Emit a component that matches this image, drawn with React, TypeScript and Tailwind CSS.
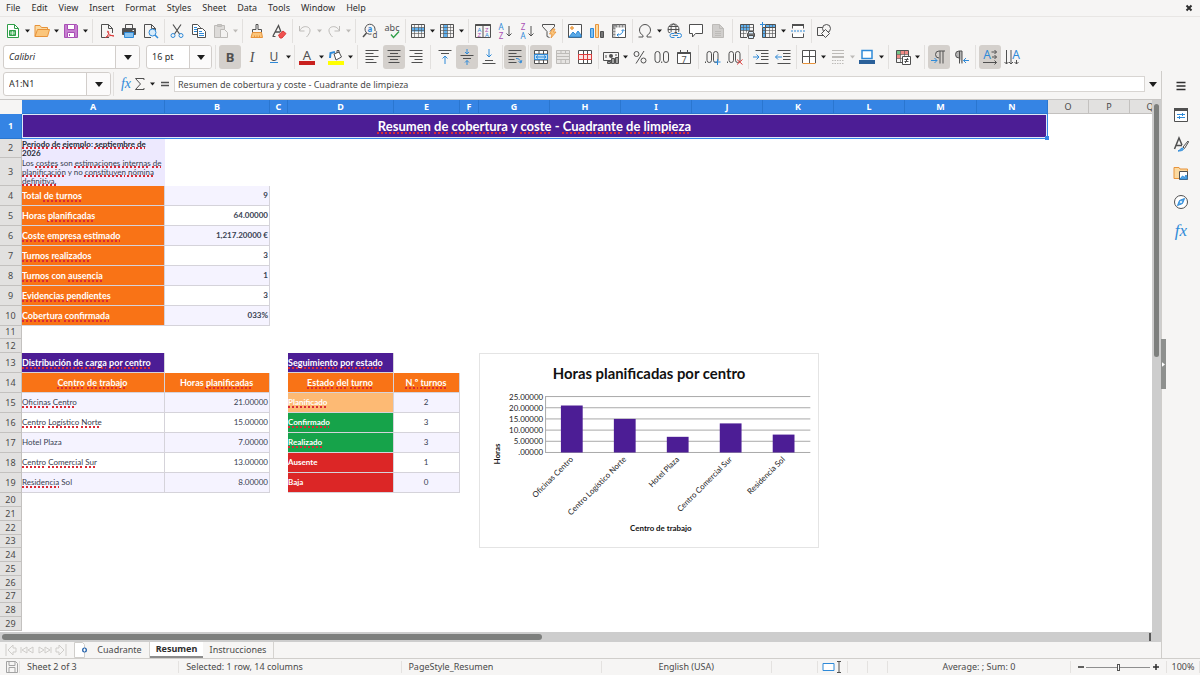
import React from "react";
import clsx from "clsx";

const DARK = "#505050";
const BLUE = "#2f8ad8";
const ORANGE = "#e8933a";
const PURPLE = "#a94fb5";
const RED = "#dd3b3b";
const GREEN = "#2f9e48";
const MUTED = "#bdbbb8";

const Ico = ({
  children,
  color = DARK,
}: {
  children: React.ReactNode;
  color?: string;
}) => (
  <svg
    viewBox="0 0 16 16"
    className="size-4 shrink-0 overflow-visible"
    fill="none"
    stroke={color}
    strokeWidth="1"
    aria-hidden="true"
  >
    {children}
  </svg>
);

const Glyph = ({
  x,
  y,
  size,
  fill = DARK,
  children,
  bold,
  italic,
  serif,
}: {
  x: number;
  y: number;
  size: number;
  fill?: string;
  children: React.ReactNode;
  bold?: boolean;
  italic?: boolean;
  serif?: boolean;
}) => (
  <text
    x={x}
    y={y}
    fontSize={size}
    fill={fill}
    stroke="none"
    textAnchor="middle"
    fontWeight={bold ? 700 : 400}
    fontStyle={italic ? "italic" : "normal"}
    fontFamily={serif ? '"Liberation Serif", serif' : '"Noto Sans", sans-serif'}
  >
    {children}
  </text>
);

const GridLines = () => (
  <>
    <path d="M1.5 4.5h13M1.5 7.5h13M1.5 10.5h13M4.5 1.5v13M8.5 1.5v13M11.5 1.5v13" strokeWidth=".6" />
    <path d="M1.5 1.5h13v13h-13z" />
  </>
);

const icons = {
  newDoc: (
    <Ico color={GREEN}>
      <path d="M2.500 1.500h7l4 4v9h-11z" fill="#fff" />
      <path d="M9.500 1.500v4h4" />
      <path d="M4.500 7.500h6v5h-6z" fill="#57b96b" />
      <path d="M5 10h5M7.500 8v4" stroke="#fff" strokeWidth=".6" />
    </Ico>
  ),
  open: (
    <Ico color={ORANGE}>
      <path d="M1 13.500V2.500h5l1.500 2h6v2" fill="#fbd9a0" />
      <path d="M1 13.500 3.500 6.500h12l-2 7z" fill="#fbc67c" />
    </Ico>
  ),
  save: (
    <Ico color={PURPLE}>
      <path d="M1.500 1.500h12l1 1v12h-13z" fill="#c77fd0" />
      <path d="M4.500 1.500h7v5h-7zM4.500 9.500h7v5h-7z" fill="#fff" />
      <path d="M6.500 11v2" />
    </Ico>
  ),
  pdf: (
    <Ico>
      <path d="M10 14.500H2.500v-13h7l4 4V10M9.500 1.500v4h4" />
      <path d="M6.500 14.500c3-1.500 4-6 2.500-6.500-2 0 2 5.500 6 5-2-1.500-6 .2-8.500 1.500z" stroke={RED} />
    </Ico>
  ),
  print: (
    <Ico>
      <path d="M4.500 5V1.500h7V5" />
      <path d="M1.500 5.500h13v6h-13z" fill={DARK} />
      <path d="M3.500 9.500h9v5h-9z" fill="#8cc4ef" stroke={BLUE} />
      <path d="M11.500 7.500H13" stroke="#fff" />
    </Ico>
  ),
  preview: (
    <Ico>
      <path d="M8 14.500H1.500v-13h7l4 4v2M8.500 1.500v4h4" />
      <circle cx="9.500" cy="9.500" r="3.500" fill="#d8ecfb" stroke={BLUE} />
      <path d="m12 12 3 3" stroke={BLUE} strokeWidth="1.500" />
    </Ico>
  ),
  cut: (
    <Ico>
      <path d="m4 1.500 6.500 9.500M12 1.500 5.500 11" strokeWidth="1.200" />
      <circle cx="4" cy="12.500" r="2" stroke={BLUE} />
      <circle cx="12" cy="12.500" r="2" stroke={BLUE} />
    </Ico>
  ),
  copy: (
    <Ico>
      <path d="M1.500 1.500h5l3 3v7h-8z" fill="#fff" />
      <path d="M3 4.500h3M3 6.500h3M3 8.500h3" stroke={BLUE} />
      <path d="M6.500 5.500h5l3 3v6h-8z" fill="#fff" />
      <path d="M8 8.500h3M8 10.500h5M8 12.500h5" stroke={BLUE} />
    </Ico>
  ),
  paste: (
    <Ico color={MUTED}>
      <path d="M1.500 2.500h10v12h-10z" fill="#dddbd9" />
      <path d="M4.500 1.500h4v2h-4z" fill="#c9c7c5" />
      <path d="M7.500 6.500h4l3 3v5h-7z" fill="#f3f2f1" />
    </Ico>
  ),
  brush: (
    <Ico>
      <path d="M7 1.500h2v5h3.500v3h-9v-3H7z" />
      <path d="M3.500 9.500 2 14.500h11.500l-1-5z" fill="#fbc67c" stroke={ORANGE} />
      <path d="M5.500 12.500v2M8 12.500v2M10.500 12.500v2" stroke={ORANGE} />
    </Ico>
  ),
  clear: (
    <Ico>
      <path d="M2 13 7.500 2.500 10 9M4 9h5" strokeWidth="1.300" />
      <path d="m7.500 12 4.500-4 3 2.500-4 4.500H9z" fill="#f0524f" stroke={RED} />
      <path d="M1.500 13.500h3" />
    </Ico>
  ),
  undo: (
    <Ico color={MUTED}>
      <path d="M2.500 3v5h5M2.500 8c2-4 5-5 8-4 4 1.500 3 6-1 10" />
    </Ico>
  ),
  redo: (
    <Ico color={MUTED}>
      <path d="M13.500 3v5h-5M13.500 8c-2-4-5-5-8-4-4 1.500-3 6 1 10" />
    </Ico>
  ),
  find: (
    <Ico>
      <path d="M9.500 11A5 5 0 1 1 13 6v2" />
      <path d="M4.500 10 1 14" strokeWidth="1.500" />
      <Glyph x={8} y={8.5} size={8} fill={BLUE} bold>a</Glyph>
      <Glyph x={13} y={15} size={8}>d</Glyph>
    </Ico>
  ),
  spelling: (
    <Ico>
      <Glyph x={8} y={8} size={9}>abc</Glyph>
      <path d="m7 11.500 2.500 3L15 8.500" stroke={GREEN} strokeWidth="1.300" />
    </Ico>
  ),
  row: (
    <Ico>
      <path d="M1.500 4.500h13v4h-13z" fill="#5fb0ee" stroke="none" />
      <GridLines />
    </Ico>
  ),
  column: (
    <Ico>
      <path d="M4.500 1.500h4v13h-4z" fill="#5fb0ee" stroke="none" />
      <GridLines />
    </Ico>
  ),
  sort: (
    <Ico>
      <path d="M.5 1.500h15v13H.500zM8 2v12" />
      <path d="M.5 2h15" strokeWidth="2" />
      <Glyph x={4.3} y={8.5} size={6} fill={BLUE}>A</Glyph>
      <Glyph x={4.3} y={14} size={6} fill={PURPLE}>Z</Glyph>
      <Glyph x={11.8} y={8.5} size={6} fill={PURPLE}>Z</Glyph>
      <Glyph x={11.8} y={14} size={6} fill={BLUE}>A</Glyph>
    </Ico>
  ),
  sortAsc: (
    <Ico>
      <Glyph x={4} y={7} size={8} fill={BLUE}>A</Glyph>
      <Glyph x={4} y={15.5} size={8} fill={PURPLE}>Z</Glyph>
      <path d="M12 3v10M9.500 10.500 12 13l2.500-2.500" />
    </Ico>
  ),
  sortDesc: (
    <Ico>
      <Glyph x={4} y={7} size={8} fill={PURPLE}>Z</Glyph>
      <Glyph x={4} y={15.5} size={8} fill={BLUE}>A</Glyph>
      <path d="M12 3v10M9.500 10.500 12 13l2.500-2.500" />
    </Ico>
  ),
  filter: (
    <Ico>
      <path d="M1.500 1.500h12v2L9 8.500M1.500 1.500v2L6 8.500v5l2.500 1" />
      <path d="m11.500 6-3 5h2.500l-1 4 5-6h-2.500l1.500-3z" fill="#fbc67c" stroke={ORANGE} strokeWidth=".8" />
    </Ico>
  ),
  image: (
    <Ico>
      <path d="M1.500 1.500h13v13h-13z" fill="#fff" />
      <path d="m2 14 4-5 2.500 2.500L11 8l3 4v2z" fill="#5aa9e6" stroke={BLUE} />
      <circle cx="5" cy="5" r="1.300" fill="#fbc67c" stroke={ORANGE} />
    </Ico>
  ),
  chart: (
    <Ico>
      <path d="M1.500 5.500h3v9h-3z" fill="#7cc0f2" stroke={BLUE} />
      <path d="M6.500 1.500h3v13h-3z" fill="#fbd9a0" stroke={ORANGE} />
      <path d="M11.500 8.500h3v6h-3z" fill="#777" />
    </Ico>
  ),
  pivot: (
    <Ico>
      <path d="M1.500 1.500h13v13h-13z" fill="#fff" />
      <path d="M1.500 3h13M3 1.500v13" stroke="#8a8a8a" strokeWidth="3" strokeDasharray="2 1" />
      <path d="M6 12c4 0 6-2 6-5M10.500 8 12 6.500 13.500 8M7.500 10.500 6 12l1.500 1.500" stroke={BLUE} />
    </Ico>
  ),
  omega: (
    <Ico>
      <path d="M1.500 14H6v-1.500C3.500 11 2.500 9 2.500 7a5.500 5.500 0 0 1 11 0c0 2-1 4-3.500 5.500V14h4.500" />
    </Ico>
  ),
  link: (
    <Ico>
      <circle cx="7.500" cy="6.500" r="5.500" />
      <ellipse cx="7.500" cy="6.500" rx="2.500" ry="5.500" />
      <path d="M2 6.500h11M3 3.500h9M3 9.500h9" />
      <path d="M8.500 10.500H6a2 2 0 0 0 0 4h2.500M11 10.500h2.500a2 2 0 0 1 0 4H11M8 12.500h4" stroke="#f6f5f4" strokeWidth="3" />
      <path d="M8.500 10.500H6a2 2 0 0 0 0 4h2.500M11 10.500h2.500a2 2 0 0 1 0 4H11M8 12.500h4" stroke={BLUE} />
    </Ico>
  ),
  comment: (
    <Ico>
      <path d="M1.500 1.500h13v9h-7L4.500 14v-3.500h-3z" fill="#fff" />
    </Ico>
  ),
  note: (
    <Ico color={MUTED}>
      <path d="M2.500 1.500h7l4 4v9h-11z" fill="#d0cecc" />
      <path d="M9.500 1.500v4h4M5 8.500h6M5 10.500h6M5 12.500h6" />
    </Ico>
  ),
  printArea: (
    <Ico>
      <path d="M1.500 1.500h9v6h-9z" fill="#5fb0ee" stroke="none" />
      <path d="M1.500 4.500h13M1.500 7.500h13M1.500 10.500h6M4.500 1.500v13M7.500 1.500v8M10.500 1.500v7" strokeWidth=".6" />
      <path d="M8 14.500H1.500v-13h13V8" />
      <path d="M8.500 10.500h7v3h-7z" fill="#777" />
      <path d="M9.500 10.500v-2h5v2M9.500 12.500h5v3h-5z" fill="#d8ecfb" />
    </Ico>
  ),
  freeze: (
    <Ico>
      <path d="M4.500 1.500h10v3h-10zM1.500 4.500h3v10h-3z" fill="#5fb0ee" stroke="none" />
      <path d="M1.500 7.500h13M1.500 10.500h13M8.500 1.500v13M11.500 1.500v13" strokeWidth=".6" />
      <path d="M4.500 1.500h10v13h-13v-10h13M4.500 1.500v13" />
      <path d="M1.500-1v5M-1 1.500h5" stroke={BLUE} />
    </Ico>
  ),
  split: (
    <Ico>
      <path d="M2.500 5.500v-3h11v3M2.500 10.500v4h11v-4" fill="#fff" />
      <path d="M2 2h12" strokeWidth="2" />
      <path d="M1 8h14" stroke={BLUE} strokeDasharray="2 1" />
    </Ico>
  ),
  shapes: (
    <Ico>
      <path d="M1.500 4.500h7v8h-7z" fill="#f6f5f4" />
      <circle cx="10.500" cy="5.500" r="4" fill="#f6f5f4" />
      <path d="m9.500 6.500 4 4-4 4-4-4z" fill="#f6f5f4" />
    </Ico>
  ),
  bold: <Ico><Glyph x={8} y={12.5} size={13} bold>B</Glyph></Ico>,
  italic: <Ico><Glyph x={8} y={12.5} size={14} italic serif>I</Glyph></Ico>,
  underline: (
    <Ico>
      <Glyph x={8} y={11.5} size={12}>U</Glyph>
      <path d="M4 13.500h8" stroke={BLUE} />
    </Ico>
  ),
  fontColor: (
    <Ico>
      <Glyph x={8} y={10.5} size={13}>A</Glyph>
      <path d="M0 12h16v4H0z" fill="#c9211e" stroke="none" />
    </Ico>
  ),
  highlight: (
    <Ico>
      <path d="m6 5 5-2 2.500 5-5.500 3z" fill="#fff" />
      <path d="M9 4V1.500h2V4" />
      <path d="m2 9 .5-5L7 3" stroke={BLUE} strokeWidth="2" />
      <path d="M0 12h16v4H0z" fill="#ffff00" stroke="none" />
    </Ico>
  ),
  alignLeft: <Ico><path d="M1.500 1.500h13M1.500 4.500h8M1.500 7.500h13M1.500 10.500h8M1.500 13.500h11" /></Ico>,
  alignCenter: <Ico><path d="M1.500 1.500h13M4 4.500h8M1.500 7.500h13M4 10.500h8M2.500 13.500h11" /></Ico>,
  alignRight: <Ico><path d="M1.500 1.500h13M6.500 4.500h8M1.500 7.500h13M6.500 10.500h8M3.500 13.500h11" /></Ico>,
  alignTop: (
    <Ico>
      <path d="M1.500 1.500h13M4 4.500h8" />
      <path d="M8 15V7M5.500 9.500 8 7l2.500 2.500" stroke={BLUE} />
    </Ico>
  ),
  alignMiddle: (
    <Ico>
      <path d="M1.500 6.500h13M4 9.500h8" />
      <path d="M8 0v5M6 3l2 2 2-2M8 16v-4.500M6 13.500l2-2 2 2" stroke={BLUE} />
    </Ico>
  ),
  alignBottom: (
    <Ico>
      <path d="M4 11.500h8M1.500 14.500h13" />
      <path d="M8 0v8M5.500 5.500 8 8l2.500-2.500" stroke={BLUE} />
    </Ico>
  ),
  wrap: (
    <Ico>
      <path d="M1.500 1.500h13M1.500 4.500h8M1.500 7.500h13M1.500 10.500h6M1.500 13.500h8" />
      <path d="M9 9.500c3 0 4 1 5 4M11.500 12.500l2.500 1.500.8-2.800" stroke={BLUE} />
    </Ico>
  ),
  merge: (
    <Ico>
      <path d="M1.500 1.500h13v13h-13zM1.500 5h13M1.500 11h13M6 1.500V5M10.500 1.500V5M6 11v3.500M10.500 11v3.500" fill="#fff" />
      <path d="M1.500 5.500h13v5h-13z" fill="#bfe0f8" stroke={BLUE} />
      <path d="M3 8h10M5 6.500 3 8l2 1.500M11 6.500 13 8l-2 1.500" stroke={BLUE} />
    </Ico>
  ),
  mergeCells: (
    <Ico color={MUTED}>
      <path d="M1.500 1.500h13v13h-13zM1.500 4.500h13M1.500 7.500h13M1.500 10.500h13M6 1.500V5M10.500 1.500V5M6 11v3.500M10.500 11v3.500" fill="#e6e4e2" />
    </Ico>
  ),
  unmerge: (
    <Ico>
      <path d="M1.500 1.500h13v13h-13zM6.500 1.500v13M10.500 1.500v13" fill="#fff" />
      <path d="M1.500 5.500h13v5h-13zM6.500 5.500v5M10.500 5.500v5" stroke={RED} fill="#fce3e3" />
    </Ico>
  ),
  currency: (
    <Ico>
      <path d="M.5 3.500h15v8H.500z" />
      <circle cx="8" cy="7" r="2" fill={DARK} stroke="none" />
      <path d="M3 6v3M13 5v2" />
      <path d="M4.500 12.500h3v2h-3zM8.500 9.500h3v5h-3zM12.500 8.500h3v6h-3z" fill="#a0a0a0" />
    </Ico>
  ),
  percent: (
    <Ico>
      <circle cx="4.500" cy="5" r="2.500" />
      <circle cx="11.500" cy="11.500" r="2.500" />
      <path d="M12 2 4 14.500" />
    </Ico>
  ),
  number: (
    <Ico>
      <rect x="1" y="2.500" width="5" height="11" rx="2.500" />
      <rect x="9.500" y="2.500" width="5" height="11" rx="2.500" />
      <path d="M7.700 12.500v1.500" />
    </Ico>
  ),
  date: (
    <Ico>
      <path d="M1.500 3.500h13v11h-13z" fill="#fff" />
      <path d="M1.500 4h13" strokeWidth="2" />
      <path d="M4.500 1v2M11.500 1v2" />
      <Glyph x={8} y={13.5} size={9}>7</Glyph>
    </Ico>
  ),
  addDecimal: (
    <Ico>
      <path d="M.5 12.500V14" />
      <rect x="2" y="2.500" width="4.500" height="11" rx="2.250" />
      <rect x="8.500" y="2.500" width="4.500" height="11" rx="2.250" />
      <path d="M12.500 10v6M9.500 13h6" stroke={BLUE} />
    </Ico>
  ),
  removeDecimal: (
    <Ico>
      <path d="M.5 12.500V14" />
      <rect x="2" y="2.500" width="4.500" height="11" rx="2.250" />
      <rect x="8.500" y="2.500" width="4.500" height="11" rx="2.250" />
      <path d="m10 10.500 5.500 5M15.500 10.500l-5.500 5" stroke={RED} />
    </Ico>
  ),
  indent: (
    <Ico>
      <path d="M2.500 1.500h13M8 4.500h7.500M8 7.500h7.500M8 10.500h7.500M2.500 14.500h13" />
      <path d="M0 8h6M3.500 5.500 6 8l-2.500 2.500" stroke={BLUE} />
    </Ico>
  ),
  outdent: (
    <Ico>
      <path d="M2.500 1.500h13M8 4.500h7.500M8 7.500h7.500M8 10.500h7.500M2.500 14.500h13" />
      <path d="M7 8H.500M3 5.500.500 8 3 10.500" stroke={BLUE} />
    </Ico>
  ),
  borders: (
    <Ico>
      <path d="M1.500 14V1.500h13V14M8.500 2v12M1.500 7.500h13" fill="#fff" />
      <path d="M1.500 14.500h13" stroke={ORANGE} />
    </Ico>
  ),
  lineStyle: (
    <Ico color={MUTED}>
      <path d="M2 1.500h12M2 4.500h12" />
      <path d="M2 8h12" strokeWidth="2" />
      <path d="M2 11.500h12M2 14.500h12" strokeDasharray="1.500 1" />
    </Ico>
  ),
  borderColor: (
    <Ico>
      <path d="M3 1.500h10v8H3z" fill="#fff" stroke={BLUE} strokeWidth="1.500" />
      <path d="M0 11h16v4H0z" fill="#2a6099" stroke="none" />
    </Ico>
  ),
  conditional: (
    <Ico>
      <path d="M1.500 1.500h4v4h-4z" fill="#72c486" stroke="none" />
      <path d="M1.500 5.500h4v4h-4zM5.500 1.500h8v4h-8z" fill="#f08b86" stroke="none" />
      <path d="M1.500 5.500h12M1.500 9.500h12M5.500 1.500v12M9.500 1.500v12" strokeWidth=".6" />
      <path d="M1.500 1.500h12v12h-12z" />
      <path d="M7.500 7.500h8v8h-8z" fill="#fff" />
      <path d="M9.500 10.500h4M9.500 12.500h4M12.700 9l-2.400 5" />
    </Ico>
  ),
  ltr: (
    <Ico>
      <path d="M8 9a3.500 3.500 0 0 1 0-7h6M9 2v12.500M12 2v12.500" />
      <path d="M0 11.500h6M3.500 9 6 11.500 3.500 14" stroke={BLUE} />
    </Ico>
  ),
  rtl: (
    <Ico>
      <path d="M6.500 9H6a3.500 3.500 0 0 1 0-7h3v12.500M6.500 2v12.500" fill="#b5b5b5" />
      <path d="M16 11.500h-5.500M13 9l-2.500 2.500L13 14" stroke={BLUE} />
    </Ico>
  ),
  horizontalText: (
    <Ico>
      <Glyph x={5} y={10} size={12} fill={BLUE}>A</Glyph>
      <path d="M9.500 3h5M12.500 1l2 2-2 2M10 8h4.500M12.500 6l2 2-2 2M1 13.500h13.500M12.500 11.500l2 2-2 2" />
    </Ico>
  ),
  verticalText: (
    <Ico>
      <Glyph x={12} y={10} size={12} fill={BLUE}>A</Glyph>
      <path d="M2.500 1v14M.500 13l2 2 2-2M7 1v14M5 13l2 2 2-2M12.500 11v4M10.500 13l2 2 2-2" />
    </Ico>
  ),
  fxSmall: <Ico><Glyph x={8} y={12} size={14} fill={BLUE} italic serif>fx</Glyph></Ico>,
  fx: <Ico><Glyph x={8} y={12.5} size={17} fill={BLUE} italic serif>fx</Glyph></Ico>,
  sum: <Ico><path d="M12 4V2.500H3.500L8.500 8l-5 5.500H12V12" /></Ico>,
  equals: <Ico><path d="M4 6.500h8M4 9.500h8" strokeWidth="1.500" /></Ico>,
  menu: <Ico color="#2e2e2e"><path d="M3.500 4.500h9M3.500 8h9M3.500 11.500h9" strokeWidth="1.300" /></Ico>,
  properties: (
    <Ico>
      <path d="M1.500 1.500h13v13h-13z" fill="#fff" />
      <path d="M1 2.500h14" strokeWidth="3" />
      <path d="M4 7.500h8M4 10.500h8M9.500 6v3M6.500 9v3" stroke={BLUE} />
    </Ico>
  ),
  stylesPanel: (
    <Ico>
      <path d="M1.500 13 6 2l3 7M3 9.500h6" strokeWidth="1.500" />
      <path d="m15 5-5 6 1.500 1.500L15.500 6z" />
      <path d="M5 15c2 0 2-3 4.500-3 2 1 1 3-4.500 3z" fill="#5aa9e6" stroke={BLUE} />
    </Ico>
  ),
  gallery: (
    <Ico color={ORANGE}>
      <path d="M1 13.500V2.500h5l1 1.500h7.500v9.500z" fill="#fbd9a0" />
      <path d="M6.500 6.500h8v8h-8z" fill="#fff" stroke={DARK} />
      <path d="m7 14 2.500-3 2 1.500L13 10l1 2v2z" fill="#5aa9e6" stroke={BLUE} />
    </Ico>
  ),
  navigator: (
    <Ico>
      <circle cx="8" cy="8" r="6.500" fill="#fff" />
      <path d="m11.500 4.500-2 5-5 2 2-5z" fill="#5aa9e6" stroke={BLUE} />
      <circle cx="8" cy="8" r="1" fill="#fff" stroke="none" />
    </Ico>
  ),
};

type IconName = keyof typeof icons;

const Arrow = ({ muted, large }: { muted?: boolean; large?: boolean }) => (
  <svg viewBox="0 0 8 5" className={large ? "h-[5px] w-2" : "h-1 w-[5px]"} fill={muted ? MUTED : "#1d1d1d"} aria-hidden="true">
    <path d="M0 0h8L4 5z" />
  </svg>
);

type Tool = {
  icon?: IconName;
  label?: string;
  caret?: boolean;
  active?: boolean;
  disabled?: boolean;
  sep?: "narrow" | "wide";
};

const t = (icon: IconName, label: string, rest: Partial<Tool> = {}): Tool => ({ icon, label, ...rest });
const narrow: Tool = { sep: "narrow" };
const wide: Tool = { sep: "wide" };
const menu = { caret: true };

const standardTools: Tool[] = [
  t("newDoc", "New", menu),
  t("open", "Open", menu),
  t("save", "Save", menu),
  wide,
  t("pdf", "Export as PDF"),
  t("print", "Print"),
  t("preview", "Print Preview"),
  narrow,
  t("cut", "Cut"),
  t("copy", "Copy"),
  t("paste", "Paste", { caret: true, disabled: true }),
  wide,
  t("brush", "Clone Formatting"),
  t("clear", "Clear Formatting"),
  narrow,
  t("undo", "Undo", { caret: true, disabled: true }),
  t("redo", "Redo", { caret: true, disabled: true }),
  wide,
  t("find", "Find & Replace"),
  t("spelling", "Spelling"),
  narrow,
  t("row", "Row", menu),
  t("column", "Column", menu),
  wide,
  t("sort", "Sort"),
  t("sortAsc", "Sort Ascending"),
  t("sortDesc", "Sort Descending"),
  t("filter", "AutoFilter"),
  narrow,
  t("image", "Insert Image"),
  t("chart", "Insert Chart"),
  t("pivot", "Pivot Table"),
  narrow,
  t("omega", "Special Character", menu),
  t("link", "Hyperlink"),
  t("comment", "Comment"),
  t("note", "Headers and Footers", { disabled: true }),
  wide,
  t("printArea", "Define Print Area"),
  t("freeze", "Freeze Rows and Columns", menu),
  t("split", "Split Window"),
  narrow,
  t("shapes", "Show Draw Functions"),
];

const formatTools: Tool[] = [
  t("bold", "Bold", { active: true }),
  t("italic", "Italic"),
  t("underline", "Underline", menu),
  narrow,
  t("fontColor", "Font Color", menu),
  t("highlight", "Background Color", menu),
  wide,
  t("alignLeft", "Align Left"),
  t("alignCenter", "Center Horizontally", { active: true }),
  t("alignRight", "Align Right"),
  wide,
  t("alignTop", "Align Top"),
  t("alignMiddle", "Center Vertically", { active: true }),
  t("alignBottom", "Align Bottom"),
  narrow,
  t("wrap", "Wrap Text", { active: true }),
  narrow,
  t("merge", "Merge and Center", { active: true }),
  t("mergeCells", "Merge Cells", { disabled: true }),
  t("unmerge", "Unmerge Cells"),
  narrow,
  t("currency", "Format as Currency", menu),
  t("percent", "Format as Percent"),
  t("number", "Format as Number"),
  t("date", "Format as Date"),
  wide,
  t("addDecimal", "Add Decimal Place"),
  t("removeDecimal", "Delete Decimal Place"),
  narrow,
  t("indent", "Increase Indent"),
  t("outdent", "Decrease Indent"),
  narrow,
  t("borders", "Borders", menu),
  t("lineStyle", "Border Style", { caret: true, disabled: true }),
  t("borderColor", "Border Color", menu),
  wide,
  t("conditional", "Conditional Formatting", menu),
  wide,
  t("ltr", "Left-To-Right", { active: true }),
  t("rtl", "Right-To-Left"),
  wide,
  t("horizontalText", "Text direction from left to right", { active: true }),
  t("verticalText", "Text direction from top to bottom"),
];

const ToolRow = ({ tools }: { tools: Tool[] }) => (
  <>
    {tools.map((tool, i) =>
      tool.sep ? (
        <span
          key={i}
          className={clsx("flex shrink-0 justify-center", tool.sep === "wide" ? "w-[7px]" : "w-1")}
        >
          <span className="h-6 w-px bg-[#e2e0de]" />
        </span>
      ) : (
        <React.Fragment key={i}>
          <button
            type="button"
            aria-label={tool.label}
            disabled={tool.disabled}
            className={clsx(
              "flex h-6 w-[22px] shrink-0 items-center justify-center rounded-[3px]",
              tool.active && "bg-[#d4d0cc]"
            )}
          >
            {icons[tool.icon!]}
          </button>
          {tool.caret && (
            <button
              type="button"
              aria-label={`${tool.label} options`}
              disabled={tool.disabled}
              className="flex h-6 w-[7px] shrink-0 items-center justify-center"
            >
              <Arrow muted={tool.disabled} />
            </button>
          )}
        </React.Fragment>
      )
    )}
  </>
);

const Combo = ({
  label,
  value,
  inputClass,
  arrowClass,
}: {
  label: string;
  value: string;
  inputClass: string;
  arrowClass: string;
}) => (
  <div className="flex h-6 shrink-0 overflow-hidden rounded-[3px] border border-[#d2cecb] bg-white">
    <input
      aria-label={label}
      defaultValue={value}
      className={clsx("border-r border-[#d2cecb] pl-[5px] text-[#2e2e2e] outline-none", inputClass)}
    />
    <button
      type="button"
      aria-label={`${label} list`}
      className={clsx("flex items-center justify-center bg-[#fbfafa]", arrowClass)}
    >
      <Arrow large />
    </button>
  </div>
);

const menus = ["File", "Edit", "View", "Insert", "Format", "Styles", "Sheet", "Data", "Tools", "Window", "Help"];

// words wrapped in underscores get the spell checker's red line
const Spell = ({ text }: { text: string }) => (
  <>
    {text.split("_").map((part, i) =>
      i % 2 ? (
        <span
          key={i}
          className="underline decoration-[#d92b34] decoration-dotted decoration-2 underline-offset-1 [text-decoration-skip-ink:none]"
        >
          {part}
        </span>
      ) : (
        part
      )
    )}
  </>
);

type Cell = { text?: string; className?: string };

const columns: [string, string][] = [
  ["A", "w-[143px]"],
  ["B", "w-[105px]"],
  ["C", "w-[18px]"],
  ["D", "w-[106px]"],
  ["E", "w-[66px]"],
  ["F", "w-[19px]"],
  ["G", "w-[71px]"],
  ["H", "w-[71px]"],
  ["I", "w-[71px]"],
  ["J", "w-[71px]"],
  ["K", "w-[71px]"],
  ["L", "w-[71px]"],
  ["M", "w-[72px]"],
  ["N", "w-[71px]"],
  ["O", "w-[41px]"],
  ["P", "w-[41px]"],
  ["Q", "w-[41px]"],
];

const summary = [
  ["Total _de_ _turnos_", "9"],
  ["Horas _planificadas_", "64.00000"],
  ["_Coste_ _empresa_ _estimado_", "1,217.20000 €"],
  ["_Turnos_ _realizados_", "3"],
  ["_Turnos_ con _ausencia_", "1"],
  ["_Evidencias_ _pendientes_", "3"],
  ["_Cobertura_ _confirmada_", "033%"],
];

const centers = [
  ["_Oficinas_ _Centro_", "21.00000"],
  ["_Centro_ _Logístico_ _Norte_", "15.00000"],
  ["Hotel Plaza", "7.00000"],
  ["_Centro_ _Comercial_ _Sur_", "13.00000"],
  ["_Residencia_ Sol", "8.00000"],
];

const states = [
  ["_Planificado_", "2", "bg-[#fdba74]"],
  ["_Confirmado_", "3", "bg-[#16a34a]"],
  ["_Realizado_", "3", "bg-[#16a34a]"],
  ["Ausente", "1", "bg-[#dc2626]"],
  ["Baja", "0", "bg-[#dc2626]"],
];

const label = "border-r border-b border-[#d5d3da] bg-[#f97316] font-bold text-white text-[9px]";
const purple = "border-r border-b border-[#d5d3da] bg-[#4c1d95] font-bold text-white text-[9px]";
const plain = "border-r border-b border-[#d5d3da] text-[#374151]";
const stripe = (i: number) => (i % 2 ? "bg-white" : "bg-[#f5f3ff]");

const rows: { height: string; cells: Cell[] }[] = [
  { height: "h-[25px]", cells: [] },
  {
    height: "h-[19px]",
    cells: [{ text: "_Periodo_ _de_ _ejemplo_: _septiembre_ _de_ 2026", className: "bg-[#ede9fe] font-bold text-[#1f2937]" }],
  },
  {
    height: "h-[28px]",
    cells: [
      {
        text: "Los _costes_ son _estimaciones_ _internas_ _de_ _planificación_ y no _constituyen_ _nómina_ _definitiva._",
        className: "bg-[#ede9fe] text-[#374151]",
      },
    ],
  },
  ...summary.map(([name, value], i) => ({
    height: "h-5",
    cells: [
      { text: name, className: label },
      { text: value, className: clsx(plain, stripe(i), "text-right font-bold text-[#1f2937]") },
    ],
  })),
  { height: "h-[13px]", cells: [] },
  { height: "h-[14px]", cells: [] },
  {
    height: "h-5",
    cells: [
      { text: "_Distribución_ _de_ _carga_ _por_ _centro_", className: purple },
      {},
      {},
      { text: "_Seguimiento_ _por_ _estado_", className: purple },
    ],
  },
  {
    height: "h-5",
    cells: [
      { text: "_Centro_ _de_ _trabajo_", className: clsx(label, "text-center") },
      { text: "Horas _planificadas_", className: clsx(label, "text-center") },
      {},
      { text: "_Estado_ _del_ _turno_", className: clsx(label, "text-center") },
      { text: "_N.º_ _turnos_", className: clsx(label, "text-center") },
    ],
  },
  ...centers.map(([name, hours], i) => ({
    height: "h-5",
    cells: [
      { text: name, className: clsx(plain, stripe(i)) },
      { text: hours, className: clsx(plain, stripe(i), "text-right") },
      {},
      {
        text: states[i][0],
        className: clsx("border-r border-b border-[#d5d3da] font-bold text-white", states[i][2]),
      },
      { text: states[i][1], className: clsx(plain, stripe(i), "text-center") },
    ],
  })),
  ...["h-[14px]", "h-[14px]", "h-[14px]", "h-[13px]", "h-[14px]", "h-[14px]", "h-[14px]", "h-[13px]", "h-[14px]", "h-[14px]"].map(
    (height) => ({ height, cells: [] })
  ),
];

const header = "border-r border-b p-0 text-center font-['Noto_Sans',sans-serif] text-[9px] leading-[10px]";
const headerOff = "border-[#c3c1bf] bg-[#e2e1e0] font-normal text-[#4a4a4a]";
const headerOn = "border-[#2a76d0] bg-[#3584e4] font-bold text-white";

const SheetGrid = () => (
  <table className="w-0 table-fixed border-separate border-spacing-0 font-['Lato',sans-serif] text-[8px] leading-[9px]">
    <colgroup>
      <col className="w-[22px]" />
      {columns.map(([name, width]) => (
        <col key={name} className={width} />
      ))}
    </colgroup>
    <thead>
      <tr className="h-[14px]">
        <th className="bg-[#f6f5f4] p-0" aria-label="Select all" />
        {columns.map(([name], i) => (
          <th key={name} scope="col" className={clsx(header, i < 14 ? headerOn : headerOff)}>
            {name}
          </th>
        ))}
      </tr>
    </thead>
    <tbody>
      {rows.map((row, r) => (
        <tr key={r} className={row.height}>
          <th scope="row" className={clsx(header, r === 0 ? headerOn : headerOff)}>
            {r + 1}
          </th>
          {r === 0 && (
            <td
              colSpan={14}
              className="relative border-r border-b border-[#3584e4] bg-[#4c1d95] p-0 text-center text-[13px] leading-5 font-bold text-white"
            >
              <Spell text="_Resumen_ _de_ _cobertura_ y _coste_ - _Cuadrante_ _de_ _limpieza_" />
              <span className="absolute inset-0 border border-[#dfe9f8]" />
              <span className="absolute -right-[2px] -bottom-[2px] size-[4px] bg-[#3584e4]" />
            </td>
          )}
          {row.cells.map((cell, c) => (
            <td key={c} className={clsx("py-0 pr-px pl-0 align-middle", cell.className)}>
              {cell.text && <Spell text={cell.text} />}
            </td>
          ))}
        </tr>
      ))}
    </tbody>
  </table>
);

const chartData = [
  { name: "Oficinas Centro", hours: 21 },
  { name: "Centro Logístico Norte", hours: 15 },
  { name: "Hotel Plaza", hours: 7 },
  { name: "Centro Comercial Sur", hours: 13 },
  { name: "Residencia Sol", hours: 8 },
];

const ticks = [0, 5, 10, 15, 20, 25];
const yFor = (value: number) => 99.5 - value * 2.26;

const HoursChart = () => (
  <svg
    viewBox="0 0 340 195"
    className="absolute top-[253px] left-[479px] h-[195px] w-[340px] border border-[#e4e4e4] bg-white font-['Lato',sans-serif]"
    role="img"
    aria-label="Horas planificadas por centro"
  >
    <text x="170" y="25" textAnchor="middle" fontSize="15" fontWeight="700" fill="#111">
      Horas planificadas por centro
    </text>
    {ticks.map((tick) => (
      <g key={tick}>
        <line x1="65" x2="333" y1={yFor(tick)} y2={yFor(tick)} stroke="#a8a8a8" />
        <text x="63" y={yFor(tick) + 3} textAnchor="end" fontSize="8" fill="#222">
          {tick ? tick.toFixed(5) : ".00000"}
        </text>
      </g>
    ))}
    <line x1="65.500" x2="65.500" y1={yFor(25)} y2={yFor(0)} stroke="#a8a8a8" />
    {chartData.map((item, i) => (
      <g key={item.name}>
        <rect x={81 + i * 53.5} y={yFor(item.hours)} width="22" height={item.hours * 2.26} fill="#4c1d95" />
        <text
          textAnchor="end"
          fontSize="8"
          fill="#222"
          transform={`translate(${94 + i * 53.5} 107) rotate(-45)`}
        >
          {item.name}
        </text>
      </g>
    ))}
    <text transform="translate(19 101) rotate(-90)" textAnchor="middle" fontSize="8" fontWeight="700" fill="#111">
      Horas
    </text>
    <text x="182" y="179" textAnchor="middle" fontSize="8" fontWeight="700" fill="#111">
      Centro de trabajo
    </text>
  </svg>
);

const SheetTabs = () => (
  <div className="flex h-4 shrink-0 items-stretch text-[9px] text-[#4a4a4a]">
    <div className="ml-1 flex w-16 items-center justify-between">
      {["First", "Previous", "Next", "Last"].map((name, i) => (
        <button key={name} type="button" aria-label={`${name} sheet`}>
          <svg viewBox="0 0 15 14" className="h-[14px] w-[15px]" fill="none" stroke="#cfcdca" aria-hidden="true">
            {i === 0 && <path d="M2 1v12M4 7l5-5v3h3v4H9v3z" />}
            {i === 1 && <path d="M1 4v6M2 7l5-3v6zM8 7l5-3v6z" />}
            {i === 2 && <path d="M14 4v6M13 7 8 4v6zM7 7 2 4v6z" />}
            {i === 3 && <path d="M13 1v12M11 7 6 2v3H3v4h3v3z" />}
          </svg>
        </button>
      ))}
    </div>
    <button type="button" aria-label="Add sheet" className="ml-1.5">
      <svg viewBox="0 0 14 16" className="h-4 w-[14px]" aria-hidden="true">
        <path d="M.5.500h8l2 2v13H.500z" fill="#fff" stroke="#d0cecb" />
        <circle cx="10.500" cy="8" r="2.500" fill="#2a66ad" />
        <path d="M9 8h3M10.500 6.500v3" stroke="#fff" />
      </svg>
    </button>
    <button type="button" className="ml-0.5 w-[60px] border-r border-[#d5d3d0]">Cuadrante</button>
    <button type="button" className="w-[53px] border-b-2 border-[#8c8c8c] bg-white font-bold text-[#2e2e2e]">
      Resumen
    </button>
    <button type="button" className="w-[71px] border-r border-[#d5d3d0]">Instrucciones</button>
  </div>
);

const StatusBar = () => (
  <footer className="grid h-[17px] shrink-0 grid-cols-[20px_159fr_223fr_199fr_170fr_46px_30px_20px_20px_183fr_96px_33px] items-center border-t border-[#d0cecb] text-[9px] leading-3 text-[#4a4a4a] *:border-r *:border-[#e4e2e0]">
    <span className="flex h-3 items-center pl-1.5">
      <svg viewBox="0 0 12 12" className="size-3 shrink-0" fill="none" stroke="#a3a3a3" aria-hidden="true">
        <path d="M.5.500h9l2 2v9H.500zM3 .500v4h6v-4M3 11.500v-5h6v5" />
      </svg>
    </span>
    <span className="pl-[7px]">Sheet 2 of 3</span>
    <span className="pl-[7px]">Selected: 1 row, 14 columns</span>
    <span className="pl-1.5">PageStyle_Resumen</span>
    <span className="text-center">English (USA)</span>
    <span className="h-3" />
    <span className="flex h-3 items-center justify-center">
      <svg viewBox="0 0 20 12" className="h-3 w-5" fill="none" aria-hidden="true">
        <path d="M1 2.500h11v7H1z" stroke={BLUE} fill="#fff" />
        <path d="M15 .500h4M15 11.500h4M17 .500v11" stroke={DARK} />
      </svg>
    </span>
    <span className="h-3" />
    <span className="h-3" />
    <span className="text-center">Average: ; Sum: 0</span>
    <span className="flex items-center justify-between px-1.5">
      <button type="button" aria-label="Zoom out" className="h-3 w-2">
        <svg viewBox="0 0 8 8" className="size-2" stroke="#2e2e2e" strokeWidth="1.500" aria-hidden="true">
          <path d="M1 4h6" />
        </svg>
      </button>
      <input
        type="range"
        aria-label="Zoom"
        defaultValue={50}
        className="h-3 w-16 appearance-none bg-transparent [&::-webkit-slider-runnable-track]:h-px [&::-webkit-slider-runnable-track]:bg-[#8f8f8f] [&::-webkit-slider-thumb]:-mt-[3px] [&::-webkit-slider-thumb]:h-[7px] [&::-webkit-slider-thumb]:w-[3px] [&::-webkit-slider-thumb]:appearance-none [&::-webkit-slider-thumb]:border [&::-webkit-slider-thumb]:border-[#555] [&::-webkit-slider-thumb]:bg-white"
      />
      <button type="button" aria-label="Zoom in" className="h-3 w-2">
        <svg viewBox="0 0 8 8" className="size-2" stroke="#2e2e2e" strokeWidth="1.500" aria-hidden="true">
          <path d="M1 4h6M4 1v6" />
        </svg>
      </button>
    </span>
    <span className="text-center">100%</span>
  </footer>
);

const panels: [IconName, string][] = [
  ["menu", "Sidebar Settings"],
  ["properties", "Properties"],
  ["stylesPanel", "Styles"],
  ["gallery", "Gallery"],
  ["navigator", "Navigator"],
  ["fx", "Functions"],
];

const App = () => {
  return (
    <div className="flex h-screen flex-col overflow-hidden bg-[#f6f5f4] font-['Noto_Sans',sans-serif] text-[9px] leading-3 text-[#2e2e2e]">
      <nav className="flex h-[17px] shrink-0 items-center gap-px border-b border-[#e8e6e4] pr-[7px] pl-px">
        {menus.map((name) => (
          <button key={name} type="button" className="px-[5px]">
            {name}
          </button>
        ))}
        <button type="button" aria-label="Close document" className="ml-auto">
          <svg viewBox="0 0 8 8" className="size-2" stroke="#2e2e2e" strokeWidth="2" aria-hidden="true">
            <path d="m1.500 1.500 5 5M6.500 1.500l-5 5" />
          </svg>
        </button>
      </nav>
      <div role="toolbar" aria-label="Standard" className="flex h-7 shrink-0 items-center pl-0.5">
        <ToolRow tools={standardTools} />
      </div>
      <div role="toolbar" aria-label="Formatting" className="flex h-[26px] shrink-0 items-start pl-[3px]">
        <Combo label="Font name" value="Calibri" inputClass="w-28 italic" arrowClass="w-[23px]" />
        <div className="w-1.5 shrink-0" />
        <Combo label="Font size" value="16 pt" inputClass="w-[43px]" arrowClass="w-[21px]" />
        <ToolRow tools={[wide, ...formatTools]} />
      </div>
      <div className="flex min-h-0 flex-1">
        <main className="flex min-w-0 flex-1 flex-col border-r border-[#cfcdca]">
          <div className="flex h-[29px] shrink-0 items-center border-b border-[#c8c6c4] pb-0.5 pl-[3px]">
            <Combo label="Name Box" value="A1:N1" inputClass="w-[83px]" arrowClass="w-[23px]" />
            <ToolRow tools={[narrow, t("fxSmall", "Function Wizard")]} />
            <button type="button" aria-label="Select Function" className="-ml-1.5 flex h-6 w-[18px] items-center justify-center">
              {icons.sum}
            </button>
            <button type="button" aria-label="Select Function options" className="flex h-6 w-[7px] items-center justify-center">
              <Arrow />
            </button>
            <button type="button" aria-label="Formula" className="flex h-6 w-[18px] items-center justify-center">
              {icons.equals}
            </button>
            <input
              aria-label="Input line"
              defaultValue="Resumen de cobertura y coste - Cuadrante de limpieza"
              className="h-4 min-w-0 flex-1 border border-[#d8d5d2] bg-white pl-[3px] text-[#4a4a4a] outline-none"
            />
            <button type="button" aria-label="Expand Formula Bar" className="flex w-4 items-center justify-center">
              <Arrow large />
            </button>
          </div>
          <div className="flex min-h-0 flex-1">
            <div className="relative min-w-0 flex-1 overflow-hidden bg-white">
              <SheetGrid />
              <HoursChart />
            </div>
            <div className="w-[9px] shrink-0 bg-[#cdcdcd] px-0.5 pt-1">
              <div className="h-[48%] w-[5px] rounded-full bg-[#7d7f7d]" />
            </div>
          </div>
          <div className="flex h-[10px] shrink-0 items-center bg-[#cdcdcd] pr-[10px] pl-0.5">
            <div className="h-1.5 w-[47%] rounded-full bg-[#7d7f7d]" />
            <div className="ml-auto h-2 w-0.5 bg-[#5a5a5a]" />
          </div>
          <SheetTabs />
        </main>
        <aside className="relative flex w-[38px] shrink-0 flex-col items-center gap-[5px] pt-[3px]">
          {panels.map(([icon, name]) => (
            <button key={name} type="button" aria-label={name} className="flex h-6 w-6 items-center justify-center">
              {icons[icon]}
            </button>
          ))}
          <button
            type="button"
            aria-label="Hide Sidebar"
            className="absolute top-[268px] -left-px flex h-[50px] w-[5px] items-center justify-center bg-[#8e908e]"
          >
            <svg viewBox="0 0 4 6" className="h-[5px] w-[3px]" fill="#fff" aria-hidden="true">
              <path d="M0 0v6l4-3z" />
            </svg>
          </button>
        </aside>
      </div>
      <StatusBar />
    </div>
  );
};

export default App;
